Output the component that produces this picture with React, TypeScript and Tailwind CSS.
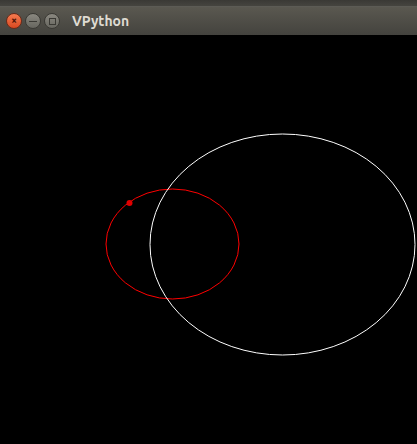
export default function App() {
  return (
    <div className="flex h-[444px] w-[417px] flex-col overflow-hidden bg-black" style={{ fontFamily: '"Ubuntu", "DejaVu Sans", "Noto Sans", sans-serif' }}>
      <div className="h-[7px] border-b border-[#5c5b55] bg-gradient-to-b from-[#3a3935] to-[#45443f]" />
      <div className="flex h-[28px] items-center bg-gradient-to-b from-[#5a5850] to-[#44433e] pl-[6px]">
        <div className="flex items-center gap-[3px]">
          <span className="flex h-[16px] w-[16px] items-center justify-center rounded-full border border-[#6a2b1a] bg-gradient-to-b from-[#f47a4f] to-[#d9481f] text-[10px] font-bold leading-none text-[#4a1406]">
            ×
          </span>
          <span className="flex h-[16px] w-[16px] items-center justify-center rounded-full border border-[#3a3934] bg-gradient-to-b from-[#8a8880] to-[#67665f]">
            <span className="h-[1px] w-[8px] bg-[#3a3934]" />
          </span>
          <span className="flex h-[16px] w-[16px] items-center justify-center rounded-full border border-[#3a3934] bg-gradient-to-b from-[#8a8880] to-[#67665f]">
            <span className="h-[7px] w-[7px] border border-[#3a3934]" />
          </span>
        </div>
        <span className="ml-[12px] text-[14px] font-bold text-[#dfdbd2]">VPython</span>
      </div>
      <svg width="417" height="409" viewBox="0 35 417 409" className="block">
        <ellipse cx="172.5" cy="244" rx="66.5" ry="55" fill="none" stroke="#ff0000" strokeWidth="1" />
        <ellipse cx="282.5" cy="244.5" rx="132.5" ry="110.5" fill="none" stroke="#ffffff" strokeWidth="1" />
        <circle cx="129.5" cy="203" r="3" fill="#e00000" />
      </svg>
    </div>
  );
}
